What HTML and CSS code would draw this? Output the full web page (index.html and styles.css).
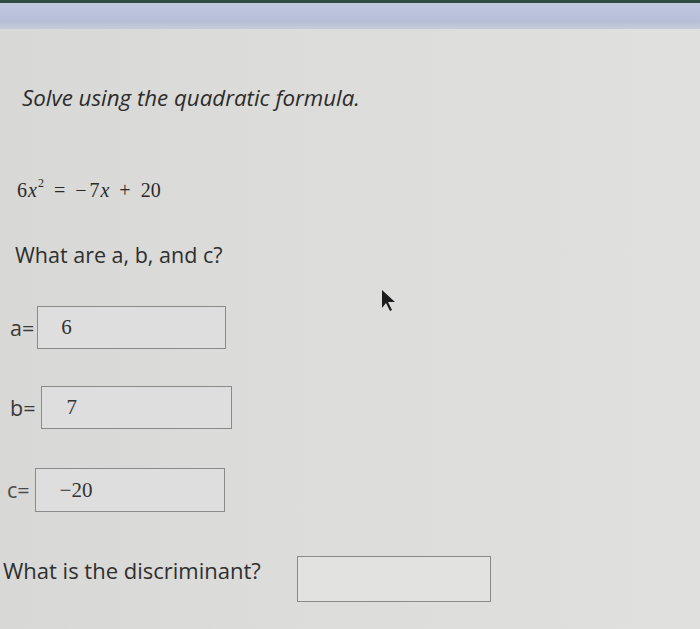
FILE: index.html
```html
<!DOCTYPE html>
<html>
<head>
<meta charset="utf-8">
<link rel="stylesheet" href="styles.css">
</head>
<body>
<div class="topline"></div>
<div class="topbar"></div>
<main class="content">
  <h1 class="title">Solve using the quadratic formula.</h1>
  <div class="equation"><span class="num">6</span><i>x</i><sup>2</sup><span class="op">=</span><span class="minus">−</span><span class="num">7</span><i>x</i><span class="op">+</span><span class="num">20</span></div>
  <p class="question">What are a, b, and c?</p>
  <div class="row row-a">
    <span class="label">a=</span>
    <div class="box box-a"><span class="val">6</span></div>
  </div>
  <div class="row row-b">
    <span class="label">b=</span>
    <div class="box box-b"><span class="val">7</span></div>
  </div>
  <div class="row row-c">
    <span class="label label-c">c=</span>
    <div class="box box-c"><span class="val">−20</span></div>
  </div>
  <div class="row row-d">
    <span class="question q-d">What is the discriminant?</span>
    <div class="box box-d"></div>
  </div>
</main>
<svg class="cursor" width="20" height="26" viewBox="0 0 20 26"><path d="M2 2 L2 20 L6 15 L10 23 L12 22 L8 14 L15 14 Z" fill="#1c1c1c"/></svg>
</body>
</html>
```

FILE: styles.css
```css
html, body {
  margin: 0;
  padding: 0;
}
body {
  width: 700px;
  height: 629px;
  overflow: hidden;
  position: relative;
  background: linear-gradient(90deg, #d8d8d6 0%, #dcdcda 40%, #e0e0df 100%);
  font-family: "Open Sans", "Liberation Sans", sans-serif;
  color: #2f2f2f;
}
.topline {
  height: 3px;
  background: #2d4c42;
}
.topbar {
  height: 26px;
  background: linear-gradient(180deg, #bfc8df 0%, #b6bfd8 70%, #c6cbd8 100%);
}
.content {
  display: flex;
  flex-direction: column;
  align-items: flex-start;
}
.title {
  margin: 55px 0 0 22px;
  font-size: 22.3px;
  line-height: 28px;
  font-style: italic;
  font-weight: 400;
  color: #2c2c2c;
}
.equation {
  margin: 64px 0 0 17px;
  font-family: "Liberation Serif", "DejaVu Serif", serif;
  font-size: 20px;
  line-height: 28px;
  color: #2a2a2a;
  display: flex;
  align-items: baseline;
}
.equation i {
  font-style: italic;
  margin-left: 1px;
}
.equation sup {
  font-size: 12px;
  position: relative;
  top: -10px;
  margin-left: 1px;
  line-height: 0;
}
.equation .op {
  margin: 0 10px;
}
.equation .minus {
  margin-right: 3px;
}
.question {
  margin: 37px 0 0 15px;
  font-size: 21.5px;
  line-height: 28px;
  color: #2f2f2f;
}
.row {
  display: flex;
  align-items: center;
}
.label {
  font-size: 21.5px;
  color: #3a3a3a;
  line-height: 24px;
}
.box {
  box-sizing: border-box;
  border: 1.5px solid #8a8a8a;
  background: #dedede;
  display: flex;
  align-items: center;
}
.val {
  font-family: "Liberation Serif", "DejaVu Serif", serif;
  font-size: 21px;
  color: #333;
}
.row-a {
  margin: 37px 0 0 10px;
}
.box-a {
  width: 189px;
  height: 43px;
  margin-left: 3px;
  padding-left: 23px;
}
.row-b {
  margin: 37px 0 0 10px;
}
.box-b {
  width: 191px;
  height: 43px;
  margin-left: 6px;
  padding-left: 24px;
}
.row-c {
  margin: 39px 0 0 7px;
}
.label-c {
  color: #4a4a4a;
}
.box-c {
  width: 190px;
  height: 44px;
  margin-left: 5px;
  padding-left: 24px;
}
.row-d {
  margin: 44px 0 0 3px;
}
.q-d {
  margin: -18px 0 0 0;
  font-size: 22px;
  line-height: 28px;
}
.box-d {
  width: 194px;
  height: 46px;
  margin-left: 36px;
  background: #e2e2e1;
}
.cursor {
  position: absolute;
  left: 380px;
  top: 288px;
}
```
